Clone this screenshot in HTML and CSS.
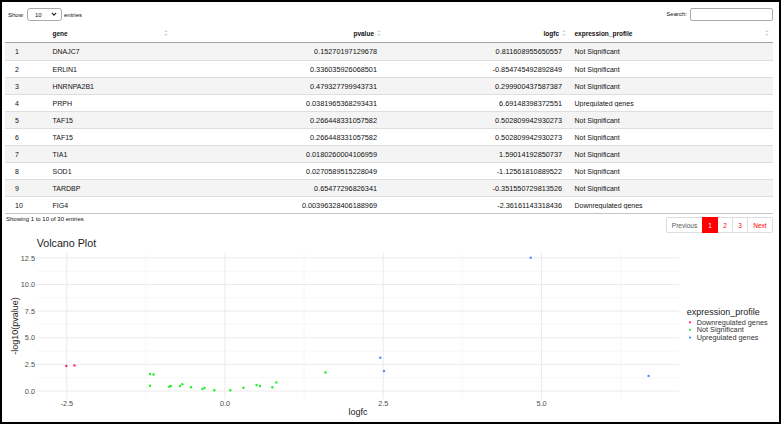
FILE: index.html
```html
<!DOCTYPE html>
<html>
<head>
<meta charset="utf-8">
<link rel="stylesheet" href="styles.css">
</head>
<body>
<div class="frame">
  <div class="dt">
    <div class="top">
      <div class="length">
        <span>Show</span>
        <span class="select"><span>10</span><svg class="chev" viewBox="0 0 7 5"><path d="M1 1 L3.5 3.6 L6 1" /></svg></span>
        <span>entries</span>
      </div>
      <div class="search">
        <span>Search:</span>
        <span class="input"></span>
      </div>
    </div>

    <div class="table">
      <div class="tr thead">
        <div class="c idx"></div>
        <div class="c th">gene</div>
        <div class="c th num-h">pvalue</div>
        <div class="c th num-h">logfc</div>
        <div class="c th">expression_profile</div>
      </div>
      <div class="tbody">
        <div class="tr"><div class="c idx">1</div><div class="c">DNAJC7</div><div class="c num">0.15270197129678</div><div class="c num">0.811608955650557</div><div class="c">Not Significant</div></div>
        <div class="tr"><div class="c idx">2</div><div class="c">ERLIN1</div><div class="c num">0.336035926068501</div><div class="c num">-0.854745492892849</div><div class="c">Not Significant</div></div>
        <div class="tr"><div class="c idx">3</div><div class="c">HNRNPA2B1</div><div class="c num">0.479327799943731</div><div class="c num">0.299900437587387</div><div class="c">Not Significant</div></div>
        <div class="tr"><div class="c idx">4</div><div class="c">PRPH</div><div class="c num">0.0381965368293431</div><div class="c num">6.69148398372551</div><div class="c">Upregulated genes</div></div>
        <div class="tr"><div class="c idx">5</div><div class="c">TAF15</div><div class="c num">0.266448331057582</div><div class="c num">0.502809942930273</div><div class="c">Not Significant</div></div>
        <div class="tr"><div class="c idx">6</div><div class="c">TAF15</div><div class="c num">0.266448331057582</div><div class="c num">0.502809942930273</div><div class="c">Not Significant</div></div>
        <div class="tr"><div class="c idx">7</div><div class="c">TIA1</div><div class="c num">0.0180260004106959</div><div class="c num">1.59014192850737</div><div class="c">Not Significant</div></div>
        <div class="tr"><div class="c idx">8</div><div class="c">SOD1</div><div class="c num">0.0270589515228049</div><div class="c num">-1.12561810889522</div><div class="c">Not Significant</div></div>
        <div class="tr"><div class="c idx">9</div><div class="c">TARDBP</div><div class="c num">0.65477296826341</div><div class="c num">-0.351550729813526</div><div class="c">Not Significant</div></div>
        <div class="tr"><div class="c idx">10</div><div class="c">FIG4</div><div class="c num">0.00396328406188969</div><div class="c num">-2.36161143318436</div><div class="c">Downregulated genes</div></div>
      </div>
    </div>

    <div class="bottom">
      <div class="info">Showing 1 to 10 of 30 entries</div>
      <div class="paging">
        <span class="pg prev">Previous</span>
        <span class="pg cur">1</span>
        <span class="pg">2</span>
        <span class="pg">3</span>
        <span class="pg next">Next</span>
      </div>
    </div>
  </div>

  <svg class="plot" width="777" height="189" viewBox="2 233 777 189">
    <text class="title" x="36.7" y="247">Volcano Plot</text>
    <g class="minor">
      <line x1="36.7" x2="679" y1="377.7" y2="377.7"/>
      <line x1="36.7" x2="679" y1="351.1" y2="351.1"/>
      <line x1="36.7" x2="679" y1="324.4" y2="324.4"/>
      <line x1="36.7" x2="679" y1="297.8" y2="297.8"/>
      <line x1="36.7" x2="679" y1="271.2" y2="271.2"/>
      <line y1="252.7" y2="399" x1="145.9" x2="145.9"/>
      <line y1="252.7" y2="399" x1="304.1" x2="304.1"/>
      <line y1="252.7" y2="399" x1="462.4" x2="462.4"/>
      <line y1="252.7" y2="399" x1="620.6" x2="620.6"/>
    </g>
    <g class="major">
      <line x1="36.7" x2="679" y1="391" y2="391"/>
      <line x1="36.7" x2="679" y1="364.4" y2="364.4"/>
      <line x1="36.7" x2="679" y1="337.75" y2="337.75"/>
      <line x1="36.7" x2="679" y1="311.1" y2="311.1"/>
      <line x1="36.7" x2="679" y1="284.5" y2="284.5"/>
      <line x1="36.7" x2="679" y1="257.9" y2="257.9"/>
      <line y1="252.7" y2="399" x1="66.75" x2="66.75"/>
      <line y1="252.7" y2="399" x1="225" x2="225"/>
      <line y1="252.7" y2="399" x1="383.25" x2="383.25"/>
      <line y1="252.7" y2="399" x1="541.5" x2="541.5"/>
    </g>
    <g class="ytick">
      <text x="35" y="260.6">12.5</text>
      <text x="35" y="287.1">10.0</text>
      <text x="35" y="313.7">7.5</text>
      <text x="35" y="340.4">5.0</text>
      <text x="35" y="367">2.5</text>
      <text x="35" y="393.6">0.0</text>
    </g>
    <g class="xtick">
      <text x="66.75" y="406">-2.5</text>
      <text x="225" y="406">0.0</text>
      <text x="383.25" y="406">2.5</text>
      <text x="541.5" y="406">5.0</text>
    </g>
    <text class="axt" x="358" y="414.6" text-anchor="middle">logfc</text>
    <text class="axt" transform="translate(17.6,325.9) rotate(-90)" text-anchor="middle">-log10(pvalue)</text>

    <g class="pt down">
      <circle cx="66.3" cy="366" r="1.2"/>
      <circle cx="74.5" cy="365.4" r="1.2"/>
    </g>
    <g class="pt ns">
      <circle cx="150" cy="374" r="1.2"/>
      <circle cx="153.5" cy="374.5" r="1.2"/>
      <circle cx="150" cy="385.7" r="1.2"/>
      <circle cx="169.3" cy="386.7" r="1.2"/>
      <circle cx="170.8" cy="386" r="1.2"/>
      <circle cx="180" cy="386" r="1.2"/>
      <circle cx="182.3" cy="384.3" r="1.2"/>
      <circle cx="191" cy="387.3" r="1.2"/>
      <circle cx="202.5" cy="389" r="1.2"/>
      <circle cx="204.5" cy="388" r="1.2"/>
      <circle cx="214.3" cy="390.3" r="1.2"/>
      <circle cx="230.3" cy="390.3" r="1.2"/>
      <circle cx="243.5" cy="387.8" r="1.2"/>
      <circle cx="256.5" cy="385" r="1.2"/>
      <circle cx="260" cy="386" r="1.2"/>
      <circle cx="272.3" cy="387.3" r="1.2"/>
      <circle cx="276.3" cy="382.4" r="1.2"/>
      <circle cx="325.5" cy="372.5" r="1.2"/>
    </g>
    <g class="pt up">
      <circle cx="380.3" cy="357.7" r="1.2"/>
      <circle cx="384" cy="371" r="1.2"/>
      <circle cx="530.7" cy="257.7" r="1.2"/>
      <circle cx="648.6" cy="375.9" r="1.2"/>
    </g>

    <text class="legt" x="686.7" y="315">expression_profile</text>
    <g class="pt down"><circle cx="690" cy="322.3" r="1.1"/></g>
    <g class="pt ns"><circle cx="690" cy="329.8" r="1.1"/></g>
    <g class="pt up"><circle cx="690" cy="337.6" r="1.1"/></g>
    <g class="legi">
      <text x="696.7" y="324.9">Downregulated genes</text>
      <text x="696.7" y="332.4">Not Significant</text>
      <text x="696.7" y="340.2">Upregulated genes</text>
    </g>
  </svg>
</div>
</body>
</html>
```

FILE: styles.css
```css
html, body {
  margin: 0;
  padding: 0;
  background: #fff;
}

body {
  font-family: "Liberation Sans", Arial, sans-serif;
  color: #222;
}

.frame {
  width: 781px;
  height: 424px;
  box-sizing: border-box;
  border: 2px solid #000;
  overflow: hidden;
  background: #fff;
}

.dt {
  padding: 6px 6px 0 3px;
}

/* top controls */
.top {
  display: flex;
  justify-content: space-between;
  align-items: center;
  height: 13px;
  font-size: 6px;
  color: #111;
}

.length {
  display: flex;
  align-items: center;
  margin-left: 3px;
}

.select {
  width: 35px;
  height: 13px;
  box-sizing: border-box;
  border: 1px solid #aaa;
  border-radius: 3px;
  display: flex;
  align-items: center;
  justify-content: space-between;
  padding: 0 4px 0 7px;
  margin: 0 2px 0 4px;
  font-size: 6px;
  background: #fff;
}

.chev {
  width: 6px;
  height: 4.5px;
}

.chev path {
  fill: none;
  stroke: #222;
  stroke-width: 1.3;
}

.search {
  display: flex;
  align-items: center;
  margin-top: -1px;
}

.input {
  width: 83px;
  height: 13px;
  box-sizing: border-box;
  border: 1px solid #aaa;
  border-radius: 2px;
  margin-left: 3px;
}

/* table */
.table {
  margin-top: 4px;
  width: 768px;
  border-bottom: 1px solid #c4c4c4;
}

.tr {
  display: grid;
  grid-template-columns: 43px 124px 213px 185px 203px;
  height: 17px;
  box-sizing: border-box;
  align-items: center;
  font-size: 7px;
  color: #111;
}

.thead {
  height: 18px;
  border-bottom: 1px solid #a3a3a3;
  font-weight: bold;
  font-size: 6.5px;
  color: #111;
}

.tbody .tr + .tr {
  border-top: 1px solid #dedede;
}

.tbody .tr:nth-child(odd) {
  background: #f4f4f4;
}

.c {
  padding: 0 8px 0 4.5px;
  white-space: nowrap;
  overflow: hidden;
}

.c.idx {
  padding-left: 10px;
}

.num {
  text-align: right;
  font-size: 7.3px;
}

.th {
  position: relative;
  padding-right: 11px;
  overflow: visible;
}

.num-h {
  text-align: right;
}

.th::before,
.th::after {
  content: "";
  position: absolute;
  right: 4px;
  width: 0;
  height: 0;
  border-left: 2px solid transparent;
  border-right: 2px solid transparent;
}

.th::before {
  top: calc(50% - 3.5px);
  border-bottom: 2.5px solid #d6d6d6;
}

.th::after {
  top: calc(50% + 0.8px);
  border-top: 2.5px solid #d6d6d6;
}

/* bottom: info + paging */
.bottom {
  display: flex;
  justify-content: space-between;
  align-items: flex-start;
  height: 19px;
}

.info {
  font-size: 6px;
  line-height: 7px;
  padding-top: 2px;
  margin-left: 1px;
  color: #111;
}

.paging {
  display: flex;
  margin-top: 3px;
  height: 16px;
  font-size: 6.5px;
}

.pg {
  width: 16px;
  height: 16px;
  box-sizing: border-box;
  border: 1px solid #dddddd;
  margin-left: -1px;
  display: flex;
  align-items: center;
  justify-content: center;
  color: #ff0000;
  background: #fff;
}

.pg.prev {
  width: 37px;
  margin-left: 0;
  color: #555;
  border-radius: 2px 0 0 2px;
}

.pg.cur {
  background: #ff0000;
  border-color: #ff0000;
  color: #fff;
  position: relative;
}

.pg.next {
  width: 26px;
  border-radius: 0 2px 2px 0;
}

/* plot */
.plot {
  display: block;
  font-family: "Liberation Sans", Arial, sans-serif;
}

.plot .title {
  font-size: 10.7px;
  fill: #222;
}

.plot .minor line {
  stroke: #f4f4f4;
  stroke-width: 0.7;
}

.plot .major line {
  stroke: #ebebeb;
  stroke-width: 1;
}

.plot .ytick text {
  font-size: 7.3px;
  fill: #4d4d4d;
  text-anchor: end;
}

.plot .xtick text {
  font-size: 7.3px;
  fill: #4d4d4d;
  text-anchor: middle;
}

.plot .axt {
  font-size: 9px;
  fill: #222;
}

.plot .down circle { fill: #ff2b5e; }
.plot .ns circle { fill: #22ee22; }
.plot .up circle { fill: #4f8cff; }

.plot .legt {
  font-size: 9px;
  fill: #222;
}

.plot .legi text {
  font-size: 7.3px;
  fill: #333;
}
```
